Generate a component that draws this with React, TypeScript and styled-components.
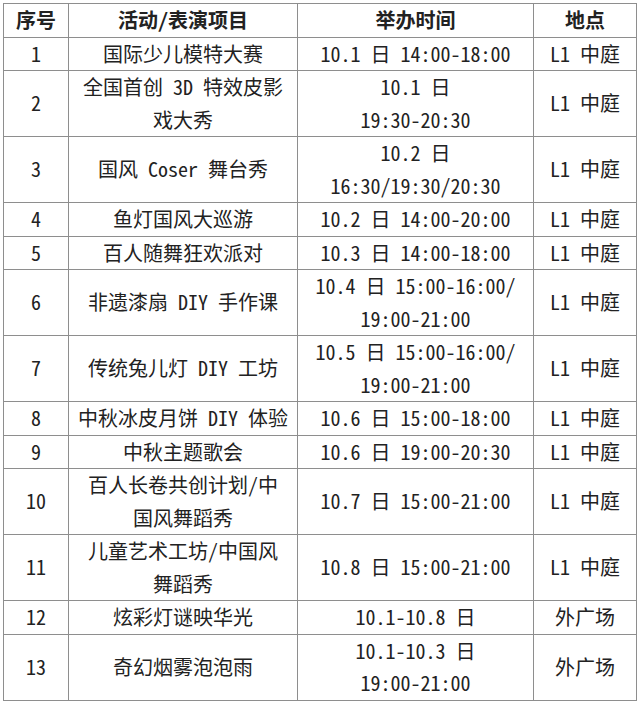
import React from 'react'
import styled, { createGlobalStyle } from 'styled-components'

const GlobalStyle = createGlobalStyle`
  html, body {
    margin: 0;
    padding: 0;
    background: #ffffff;
  }
`

type Row = { no: number; name: string[]; time: string[]; place: string }

const rows: Row[] = [
    { no: 1, name: ['国际少儿模特大赛'], time: ['10.1 日 14:00-18:00'], place: 'L1 中庭' },
    { no: 2, name: ['全国首创 3D 特效皮影', '戏大秀'], time: ['10.1 日', '19:30-20:30'], place: 'L1 中庭' },
    { no: 3, name: ['国风 Coser 舞台秀'], time: ['10.2 日', '16:30/19:30/20:30'], place: 'L1 中庭' },
    { no: 4, name: ['鱼灯国风大巡游'], time: ['10.2 日 14:00-20:00'], place: 'L1 中庭' },
    { no: 5, name: ['百人随舞狂欢派对'], time: ['10.3 日 14:00-18:00'], place: 'L1 中庭' },
    { no: 6, name: ['非遗漆扇 DIY 手作课'], time: ['10.4 日 15:00-16:00/', '19:00-21:00'], place: 'L1 中庭' },
    { no: 7, name: ['传统兔儿灯 DIY 工坊'], time: ['10.5 日 15:00-16:00/', '19:00-21:00'], place: 'L1 中庭' },
    { no: 8, name: ['中秋冰皮月饼 DIY 体验'], time: ['10.6 日 15:00-18:00'], place: 'L1 中庭' },
    { no: 9, name: ['中秋主题歌会'], time: ['10.6 日 19:00-20:30'], place: 'L1 中庭' },
    { no: 10, name: ['百人长卷共创计划/中', '国风舞蹈秀'], time: ['10.7 日 15:00-21:00'], place: 'L1 中庭' },
    { no: 11, name: ['儿童艺术工坊/中国风', '舞蹈秀'], time: ['10.8 日 15:00-21:00'], place: 'L1 中庭' },
    { no: 12, name: ['炫彩灯谜映华光'], time: ['10.1-10.8 日'], place: '外广场' },
    { no: 13, name: ['奇幻烟雾泡泡雨'], time: ['10.1-10.3 日', '19:00-21:00'], place: '外广场' },
]

const Table = styled.table`
  margin: 3px 0 0 3px;
  width: 633px;
  table-layout: fixed;
  border-collapse: collapse;
  font-family: "Noto Sans Mono CJK SC", "Noto Sans CJK SC", "DejaVu Sans Mono", monospace;
  font-size: 20px;
  color: #222222;
`

const Cell = styled.td<{ $head?: boolean }>`
  border: 1px solid #8e8e8e;
  padding: 0;
  text-align: center;
  vertical-align: middle;
  line-height: 32.5px;
  white-space: nowrap;
  font-weight: ${(p) => (p.$head ? 700 : 400)};
`

function Lines({ items }: { items: string[] }) {
    return (
        <>
            {items.map((t, i) => (
                <React.Fragment key={i}>
                    {i > 0 && <br />}
                    {t}
                </React.Fragment>
            ))}
        </>
    )
}

export default function App() {
    return (
        <>
            <GlobalStyle />
            <Table>
                <colgroup>
                    <col style={{ width: 65 }} />
                    <col style={{ width: 229 }} />
                    <col style={{ width: 236 }} />
                    <col style={{ width: 103 }} />
                </colgroup>
                <thead>
                    <tr>
                        <Cell as="th" $head>序号</Cell>
                        <Cell as="th" $head>活动/表演项目</Cell>
                        <Cell as="th" $head>举办时间</Cell>
                        <Cell as="th" $head>地点</Cell>
                    </tr>
                </thead>
                <tbody>
                    {rows.map((r) => (
                        <tr key={r.no}>
                            <Cell>{r.no}</Cell>
                            <Cell><Lines items={r.name} /></Cell>
                            <Cell><Lines items={r.time} /></Cell>
                            <Cell>{r.place}</Cell>
                        </tr>
                    ))}
                </tbody>
            </Table>
        </>
    )
}
